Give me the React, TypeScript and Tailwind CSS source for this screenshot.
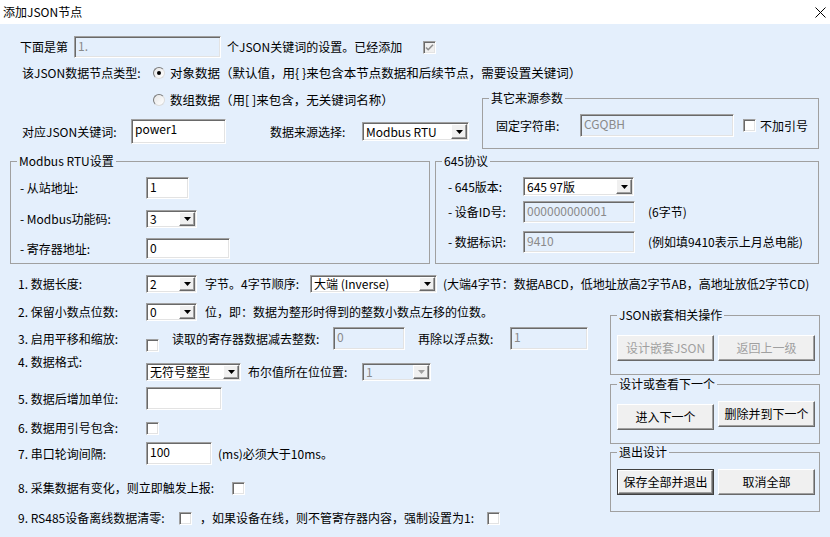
import React from 'react';

const sunken =
  'border border-t-[#a0a0a0] border-l-[#a0a0a0] border-r-white border-b-white shadow-[inset_1px_1px_0_#696969,inset_-1px_-1px_0_#e3e3e3]';

function Field({ className = '', value = '', disabled = false }: { className?: string; value?: string; disabled?: boolean }) {
  return (
    <div
      className={`${sunken} ${className} ${disabled ? 'bg-[#e4effc] text-[#8a8a8a]' : 'bg-white text-black'} shrink-0 pl-[3px] pt-[1px] leading-[16px] whitespace-nowrap`}
    >
      {value}
    </div>
  );
}

function Combo({ className = '', value = '', disabled = false }: { className?: string; value?: string; disabled?: boolean }) {
  return (
    <div
      className={`${sunken} ${className} ${disabled ? 'bg-[#e4effc] text-[#8a8a8a]' : 'bg-white text-black'} shrink-0 flex items-center p-[1px]`}
    >
      <span className="flex-1 pl-[2px] whitespace-nowrap leading-[16px]">{value}</span>
      <div className="w-[16px] self-stretch bg-[#f0f0f0] border border-t-white border-l-white border-r-[#696969] border-b-[#696969] shadow-[inset_-1px_-1px_0_#a0a0a0] flex items-center justify-center">
        <svg width="7" height="4" viewBox="0 0 7 4">
          <path d="M0 0h7L3.5 4z" fill={disabled ? '#a0a0a0' : '#000'} />
        </svg>
      </div>
    </div>
  );
}

function Check({ className = '', checked = false, disabled = false }: { className?: string; checked?: boolean; disabled?: boolean }) {
  return (
    <div
      className={`${sunken} ${className} ${disabled ? 'bg-[#f0f0f0]' : 'bg-white'} w-[13px] h-[13px] shrink-0 flex items-center justify-center`}
    >
      {checked && (
        <svg width="9" height="9" viewBox="0 0 9 9">
          <path d="M1 4.5l2.2 2.2L8 1.8" stroke={disabled ? '#8d8d8d' : '#000'} strokeWidth="1.6" fill="none" />
        </svg>
      )}
    </div>
  );
}

function Radio({ checked = false }: { checked?: boolean }) {
  return (
    <div className="w-[12px] h-[12px] shrink-0 rounded-full border border-t-[#7a7a7a] border-l-[#7a7a7a] border-r-[#dcdcdc] border-b-[#dcdcdc] bg-gradient-to-br from-[#e6e6e6] to-white flex items-center justify-center">
      {checked && <div className="w-[4px] h-[4px] rounded-full bg-black" />}
    </div>
  );
}

function Btn({ children, className = '', disabled = false, def = false }: { children: React.ReactNode; className?: string; disabled?: boolean; def?: boolean }) {
  return (
    <div className={`${className} shrink-0 ${def ? 'border border-[#404040]' : ''}`}>
      <div
        className={`w-full h-full bg-[#f0f0f0] border border-t-white border-l-white border-r-[#696969] border-b-[#696969] shadow-[inset_-1px_-1px_0_#a0a0a0] flex items-center justify-center whitespace-nowrap ${
          disabled ? 'text-[#a0a0a0]' : 'text-black'
        }`}
      >
        {children}
      </div>
    </div>
  );
}

function Group({ title, className = '', children }: { title: string; className?: string; children: React.ReactNode }) {
  return (
    <fieldset className={`border border-[#a0a0a0] shrink-0 ${className}`}>
      <legend className="ml-[6px] px-[2px] leading-[16px]">{title}</legend>
      {children}
    </fieldset>
  );
}

export default function App() {
  return (
    <div className="w-[830px] h-[537px] flex flex-col bg-white text-black text-[12px] leading-[16px] font-['Noto_Sans_CJK_SC','Noto_Sans',sans-serif] overflow-hidden">
      <div className="h-[24px] shrink-0 flex items-center justify-between pl-[3px] pr-[4px]">
        <span className="text-[12px]">添加JSON节点</span>
        <svg width="11" height="11" viewBox="0 0 11 11">
          <path d="M0.5 0.5l10 10M10.5 0.5l-10 10" stroke="#000" strokeWidth="1" />
        </svg>
      </div>

      <div className="flex-1 bg-[#e4effc] flex flex-col">
        {/* 第几个关键词 */}
        <div className="mt-[12px] h-[22px] flex items-center pl-[20px]">
          <span className="w-[54px]">下面是第</span>
          <Field className="w-[147px] h-[22px]" value="1." disabled />
          <span className="ml-[6px] whitespace-nowrap">个JSON关键词的设置。已经添加</span>
          <Check className="ml-[21px]" checked disabled />
        </div>

        <div className="mt-[7px] h-[16px] flex items-center pl-[22px]">
          <span className="w-[131px]">该JSON数据节点类型:</span>
          <Radio checked />
          <span className="ml-[5px] text-[12.5px] whitespace-pre">对象数据（默认值，用{'{ }'}来包含本节点数据和后续节点，需要设置关键词）</span>
        </div>

        <div className="mt-[11px] flex">
          <div className="w-[482px] shrink-0 pl-[22px] flex flex-col">
            <div className="h-[16px] flex items-center pl-[131px]">
              <Radio />
              <span className="ml-[5px] text-[12.5px] whitespace-pre">数组数据（用[ ]来包含，无关键词名称）</span>
            </div>
            <div className="mt-[11px] h-[25px] flex items-center">
              <span className="w-[109px]">对应JSON关键词:</span>
              <Field className="w-[95px] h-[25px]" value="power1" />
              <span className="ml-[44px] w-[92px]">数据来源选择:</span>
              <Combo className="w-[107px] h-[19px]" value="Modbus RTU" />
            </div>
          </div>
          <Group title="其它来源参数" className="w-[337px] h-[59px] -mt-[2px]">
            <div className="mt-[8px] h-[23px] flex items-center pl-[13px]">
              <span className="w-[84px]">固定字符串:</span>
              <Field className="w-[154px] h-[23px]" value="CGQBH" disabled />
              <Check className="ml-[9px]" />
              <span className="ml-[4px]">不加引号</span>
            </div>
          </Group>
        </div>

        {/* 分组设置 */}
        <div className="mt-[4px] flex pl-[10px]">
          <Group title="Modbus RTU设置" className="w-[420px] h-[111px]">
            <div className="pl-[9px] flex flex-col">
              <div className="mt-[8px] h-[22px] flex items-center">
                <span className="w-[126px]">- 从站地址:</span>
                <Field className="w-[43px] h-[22px]" value="1" />
              </div>
              <div className="mt-[11px] h-[18px] flex items-center">
                <span className="w-[126px]">- Modbus功能码:</span>
                <Combo className="w-[51px] h-[18px]" value="3" />
              </div>
              <div className="mt-[10px] h-[21px] flex items-center">
                <span className="w-[126px]">- 寄存器地址:</span>
                <Field className="w-[84px] h-[21px]" value="0" />
              </div>
            </div>
          </Group>
          <Group title="645协议" className="ml-[5px] w-[384px] h-[111px]">
            <div className="pl-[12px] flex flex-col">
              <div className="mt-[8px] h-[19px] flex items-center">
                <span className="w-[75px]">- 645版本:</span>
                <Combo className="w-[111px] h-[19px]" value="645 97版" />
              </div>
              <div className="mt-[5px] h-[22px] flex items-center">
                <span className="w-[75px]">- 设备ID号:</span>
                <Field className="w-[112px] h-[22px]" value="000000000001" disabled />
                <span className="ml-[13px]">(6字节)</span>
              </div>
              <div className="mt-[8px] h-[22px] flex items-center">
                <span className="w-[75px]">- 数据标识:</span>
                <Field className="w-[112px] h-[22px]" value="9410" disabled />
                <span className="ml-[13px] whitespace-nowrap">(例如填9410表示上月总电能)</span>
              </div>
            </div>
          </Group>
        </div>

        {/* 数据项设置 */}
        <div className="mt-[11px] h-[18px] flex items-center pl-[18px] whitespace-nowrap">
          <span className="w-[128px]">1. 数据长度:</span>
          <Combo className="w-[51px] h-[18px]" value="2" />
          <span className="ml-[8px] w-[105px]">字节。4字节顺序:</span>
          <Combo className="w-[127px] h-[18px]" value="大端 (Inverse)" />
          <span className="ml-[6px]">(大端4字节：数据ABCD，低地址放高2字节AB，高地址放低2字节CD)</span>
        </div>

        <div className="mt-[10px] flex">
          <div className="w-[610px] shrink-0 pl-[18px] flex flex-col whitespace-nowrap">
            <div className="h-[18px] flex items-center">
              <span className="w-[128px]">2. 保留小数点位数:</span>
              <Combo className="w-[51px] h-[18px]" value="0" />
              <span className="ml-[8px]">位，即：数据为整形时得到的整数小数点左移的位数。</span>
            </div>
            <div className="mt-[6px] h-[23px] flex items-center">
              <span className="w-[128px]">3. 启用平移和缩放:</span>
              <Check className="mt-[14px]" />
              <span className="ml-[13px] w-[161px]">读取的寄存器数据减去整数:</span>
              <Field className="w-[72px] h-[23px]" value="0" disabled />
              <span className="ml-[13px] w-[92px]">再除以浮点数:</span>
              <Field className="w-[78px] h-[23px]" value="1" disabled />
            </div>
            <div className="mt-[13px] h-[18px] flex items-center">
              <span className="w-[128px] -mt-[20px]">4. 数据格式:</span>
              <Combo className="w-[95px] h-[18px]" value="无符号整型" />
              <span className="ml-[7px] w-[114px]">布尔值所在位位置:</span>
              <Combo className="w-[69px] h-[18px]" value="1" disabled />
            </div>
            <div className="mt-[6px] h-[23px] flex items-center">
              <span className="w-[128px]">5. 数据后增加单位:</span>
              <Field className="w-[76px] h-[23px]" />
            </div>
            <div className="mt-[11px] h-[14px] flex items-center">
              <span className="w-[128px]">6. 数据用引号包含:</span>
              <Check />
            </div>
            <div className="mt-[7px] h-[23px] flex items-center">
              <span className="w-[128px]">7. 串口轮询间隔:</span>
              <Field className="w-[66px] h-[23px]" value="100" />
              <span className="ml-[6px]">(ms)必须大于10ms。</span>
            </div>
            <div className="mt-[16px] h-[14px] flex items-center">
              <span className="w-[214px]">8. 采集数据有变化，则立即触发上报:</span>
              <Check />
            </div>
            <div className="mt-[16px] h-[14px] flex items-center">
              <span className="w-[161px]">9. RS485设备离线数据清零:</span>
              <Check />
              <span className="ml-[8px] w-[287px]">，如果设备在线，则不管寄存器内容，强制设置为1:</span>
              <Check />
            </div>
          </div>

          <div className="w-[210px] shrink-0 flex flex-col">
            <Group title="JSON嵌套相关操作" className="mt-[4px] w-[210px] h-[68px]">
              <div className="mt-[12px] pl-[6px] flex">
                <Btn className="w-[97px] h-[26px]" disabled>设计嵌套JSON</Btn>
                <Btn className="ml-[4px] w-[97px] h-[26px]" disabled>返回上一级</Btn>
              </div>
            </Group>
            <Group title="设计或查看下一个" className="mt-[1px] w-[210px] h-[68px]">
              <div className="pl-[6px] flex items-start">
                <Btn className="mt-[12px] w-[97px] h-[26px]">进入下一个</Btn>
                <Btn className="mt-[9px] ml-[4px] w-[97px] h-[26px]">删除并到下一个</Btn>
              </div>
            </Group>
            <Group title="退出设计" className="w-[210px] h-[68px]">
              <div className="mt-[9px] pl-[6px] flex">
                <Btn className="w-[97px] h-[26px]" def>保存全部并退出</Btn>
                <Btn className="ml-[4px] w-[97px] h-[26px]">取消全部</Btn>
              </div>
            </Group>
          </div>
        </div>
      </div>
    </div>
  );
}
